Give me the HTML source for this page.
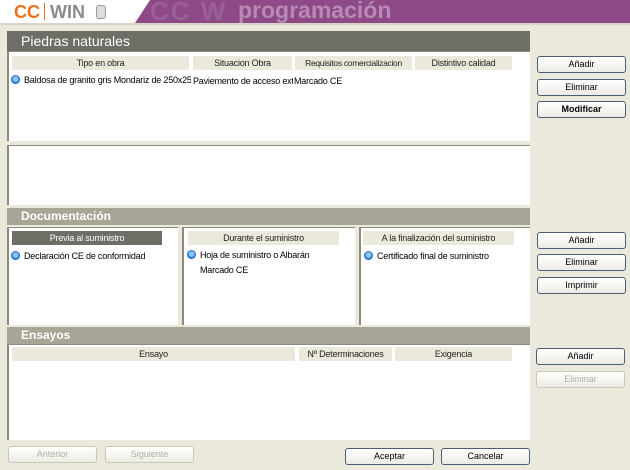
<!DOCTYPE html>
<html><head><meta charset="utf-8"><style>
*{box-sizing:border-box;margin:0;padding:0}
body{width:630px;height:470px;background:#ebe8dc;font-family:"Liberation Sans",sans-serif;font-size:9px;color:#000;position:relative;overflow:hidden}
.a{position:absolute;white-space:nowrap}
.bar{position:absolute;left:7px;width:523px;color:#fff}
.white{position:absolute;background:#fff;border-left:2px solid #8c8a80;border-top:1px solid #8c8a80}
.hd{position:absolute;background:#ebe8dc;height:14px;text-align:center;line-height:14px;font-size:9px;color:#222;white-space:nowrap;overflow:hidden;letter-spacing:-0.2px}
.btn{position:absolute;width:89px;height:17px;border:1px solid #4a5e7a;border-radius:3px;background:linear-gradient(#fff,#ecebe4);text-align:center;line-height:15px;font-size:9px}
.dis{border-color:#cac7bb;color:#b0aea5}
.dot{display:inline-block;width:9px;height:9px;border-radius:50%;background:radial-gradient(circle at 50% 45%,#8ec6ff 0 30%,#1c6ad0 60%,#0c3f8a);vertical-align:-1px;margin-right:4px}
.t{letter-spacing:-0.2px}
</style></head><body>
<div class="a" style="left:0;top:0;width:630px;height:23px;background:#8d4a86"></div>
<svg class="a" style="left:0;top:0" width="150" height="23"><polygon points="0,0 150,0 135,23 0,23" fill="#fff"/></svg>
<div class="a" style="left:0;top:23px;width:630px;height:2px;background:#d7d4c8"></div>
<div class="a" style="left:14px;top:2px;font-size:18px;font-weight:bold;color:#e8731e">CC</div>
<div class="a" style="left:44px;top:3px;width:1px;height:17px;background:#e8731e"></div>
<div class="a" style="left:50px;top:2px;font-size:18px;font-weight:bold;color:#8a8a8a">WIN</div>
<div class="a" style="left:96px;top:5px;width:10px;height:14px;border:1px solid #999;border-radius:3px;background:#ddd"></div>
<div class="a" style="left:150px;top:-4px;font-size:26px;font-weight:bold;color:#9a5f95;letter-spacing:2px">CC W</div>
<div class="a" style="left:238px;top:-3px;font-size:23px;font-weight:bold;color:#b889b3">programación</div>

<div class="bar" style="top:31px;height:20px;background:#6e6d66;font-size:14px;line-height:20px;padding-left:14px">Piedras naturales</div>
<div class="white" style="left:7px;top:51px;width:523px;height:90px"></div>
<div class="hd" style="left:12px;top:56px;width:177px">Tipo en obra</div>
<div class="hd" style="left:193px;top:56px;width:99px">Situacion Obra</div>
<div class="hd" style="left:295px;top:56px;width:117px;font-size:8.5px;letter-spacing:-0.3px">Requisitos comercializacion</div>
<div class="hd" style="left:415px;top:56px;width:97px">Distintivo calidad</div>
<div class="a t" style="left:11px;top:75px;width:180px;overflow:hidden"><span class="dot"></span>Baldosa de granito gris Mondariz de 250x25l</div>
<div class="a t" style="left:193px;top:76px;width:100px;overflow:hidden">Paviemento de acceso ext</div>
<div class="a t" style="left:294px;top:76px">Marcado CE</div>
<div class="white" style="left:7px;top:145px;width:523px;height:60px"></div>

<div class="bar" style="top:208px;height:17px;background:#a8a596;font-size:12px;font-weight:bold;line-height:17px;padding-left:14px">Documentación</div>
<div class="white" style="left:7px;top:227px;width:171px;height:98px"></div>
<div class="white" style="left:182px;top:227px;width:173px;height:98px"></div>
<div class="white" style="left:359px;top:227px;width:171px;height:98px"></div>
<div class="hd" style="left:12px;top:231px;width:150px;background:#6e6d66;color:#fff">Previa al suministro</div>
<div class="hd" style="left:188px;top:231px;width:151px">Durante el suministro</div>
<div class="hd" style="left:363px;top:231px;width:151px">A la finalización del suministro</div>
<div class="a t" style="left:11px;top:251px"><span class="dot"></span>Declaración CE de conformidad</div>
<div class="a t" style="left:187px;top:250px"><span class="dot"></span>Hoja de suministro o Albarán</div>
<div class="a t" style="left:200px;top:265px">Marcado CE</div>
<div class="a t" style="left:364px;top:251px"><span class="dot"></span>Certificado final de suministro</div>

<div class="bar" style="top:327px;height:17px;background:#a8a596;font-size:12px;font-weight:bold;line-height:17px;padding-left:14px">Ensayos</div>
<div class="white" style="left:7px;top:344px;width:523px;height:96px"></div>
<div class="hd" style="left:12px;top:347px;width:283px">Ensayo</div>
<div class="hd" style="left:299px;top:347px;width:93px">Nº Determinaciones</div>
<div class="hd" style="left:395px;top:347px;width:117px">Exigencia</div>

<div class="btn" style="left:537px;top:56px">Añadir</div>
<div class="btn" style="left:537px;top:79px">Eliminar</div>
<div class="btn" style="left:537px;top:101px;font-weight:bold">Modificar</div>
<div class="btn" style="left:537px;top:232px">Añadir</div>
<div class="btn" style="left:537px;top:254px">Eliminar</div>
<div class="btn" style="left:537px;top:277px">Imprimir</div>
<div class="btn" style="left:536px;top:348px">Añadir</div>
<div class="btn dis" style="left:536px;top:371px">Eliminar</div>
<div class="btn dis" style="left:8px;top:446px">Anterior</div>
<div class="btn dis" style="left:105px;top:446px">Siguiente</div>
<div class="btn" style="left:345px;top:448px">Aceptar</div>
<div class="btn" style="left:441px;top:448px">Cancelar</div>
</body></html>
